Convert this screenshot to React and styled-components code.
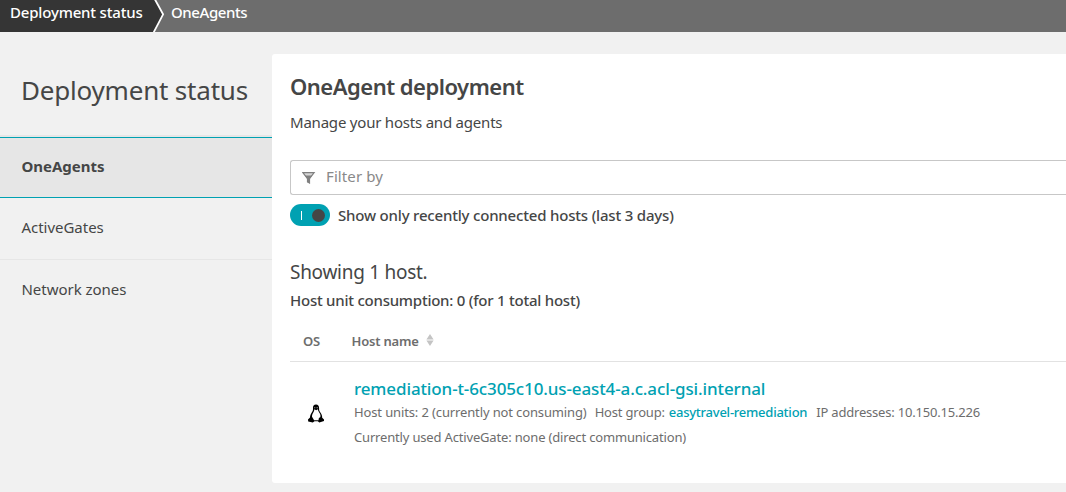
import React from "react";
import styled, { createGlobalStyle } from "styled-components";

const teal = "#00a1b2";
const ink = "#454646";

const GlobalStyle = createGlobalStyle`
  *, *::before, *::after { box-sizing: border-box; }
  body {
    margin: 0;
    background: #f1f1f1;
    color: ${ink};
    font-family: "Noto Sans", "Open Sans", sans-serif;
    font-size: 15px;
    overflow: hidden;
  }
`;

const Page = styled.div`
  display: flex;
  flex-direction: column;
  height: 492px;
`;

const Breadcrumbs = styled.nav`
  display: flex;
  flex: none;
  height: 32px;
  background: #6d6d6d;
  color: #fff;
  line-height: 25px;
  font-weight: 500;
`;

const RootCrumb = styled.a`
  width: 153px;
  padding-left: 10px;
  background: #353535;
  letter-spacing: -0.18px;
  white-space: nowrap;
`;

const CrumbArrow = styled.svg`
  display: block;
  width: 12px;
  height: 32px;
`;

const Crumb = styled.span`
  padding-left: 6px;
  letter-spacing: -0.42px;
`;

const Body = styled.div`
  display: flex;
  flex: 1;
  min-height: 0;
`;

const Sidebar = styled.aside`
  flex: none;
  width: 272px;
`;

const SidebarTitle = styled.h2`
  margin: 0;
  height: 105px;
  padding: 38px 0 0 21px;
  border-bottom: 2px solid #e6e6e6;
  font-size: 26px;
  font-weight: 400;
  line-height: 40px;
  letter-spacing: -0.2px;
`;

const NavItem = styled.a`
  display: flex;
  align-items: center;
  height: ${(p) => (p.$active ? 61 : 62)}px;
  padding: 0 21.5px 4px;
  border-style: solid;
  border-width: ${(p) => (p.$active ? "1px 0" : "0 0 1px")};
  border-color: ${(p) => (p.$active ? teal : p.$last ? "transparent" : "#e6e6e6")};
  background: ${(p) => (p.$active ? "#e6e6e6" : "transparent")};
  font-weight: ${(p) => (p.$active ? 700 : 400)};
  letter-spacing: -0.03px;
`;

const Panel = styled.main`
  flex: 1;
  height: 429px;
  margin-top: 22px;
  padding: 19px 0 0 18px;
  background: #fff;
  border-radius: 3px 0 0 3px;
`;

const Title = styled.h1`
  margin: 0;
  font-size: 22px;
  font-weight: 600;
  line-height: 26px;
  letter-spacing: -0.5px;
`;

const Subtitle = styled.p`
  margin: 12px 0 0;
  line-height: 22px;
  letter-spacing: -0.21px;
`;

const FilterBox = styled.div`
  display: flex;
  align-items: center;
  height: 35px;
  margin-top: 27px;
  padding: 0 0 4px 11px;
  border: 1px solid #c7c7c7;
  border-right: 0;
  border-radius: 3px 0 0 3px;
  color: #898989;
  letter-spacing: 0.1px;
`;

const FilterIcon = styled.svg`
  width: 14px;
  height: 14px;
  margin: 4px 10px 0 0;
`;

const ToggleRow = styled.label`
  display: flex;
  align-items: center;
  height: 22px;
  margin-top: 9px;
  font-weight: 500;
  letter-spacing: -0.19px;
`;

const Toggle = styled.span`
  display: flex;
  align-items: center;
  justify-content: space-between;
  width: 40px;
  height: 22px;
  margin-right: 8px;
  padding: 0 5px 0 11px;
  border-radius: 11px;
  background: ${teal};

  &::before {
    content: "";
    width: 1px;
    height: 9px;
    background: #fff;
  }

  &::after {
    content: "";
    width: 13px;
    height: 13px;
    margin-top: 1px;
    border-radius: 50%;
    background: ${ink};
  }
`;

const Summary = styled.h3`
  margin: 33px 0 0;
  font-size: 19px;
  font-weight: 400;
  line-height: 26px;
  letter-spacing: -0.28px;
`;

const Consumption = styled.p`
  margin: 4px 0 0;
  font-weight: 500;
  line-height: 22px;
  letter-spacing: -0.24px;
`;

const HeaderRow = styled.div`
  display: grid;
  grid-template-columns: 61.5px auto 1fr;
  align-items: center;
  height: 41px;
  margin-top: 10px;
  padding-bottom: 1px;
  border-bottom: 1px solid #e2e2e2;
  color: #6d6d6d;
  font-size: 13px;
  font-weight: 600;
  letter-spacing: -0.2px;
`;

const OsHeader = styled.span`
  padding-left: 13px;
`;

const SortIcon = styled.svg`
  width: 8px;
  height: 12px;
  margin: 0 0 2px 7px;
`;

const HostRow = styled.div`
  display: grid;
  grid-template-columns: 64px 1fr;
  padding-top: 14px;
`;

const OsIcon = styled.svg`
  width: 18px;
  height: 19px;
  margin: 28px 0 0 17px;
`;

const HostName = styled.a`
  display: block;
  color: ${teal};
  font-size: 17px;
  font-weight: 500;
  line-height: 25px;
  letter-spacing: -0.12px;
`;

const Meta = styled.div`
  display: flex;
  height: 25px;
  color: #6d6d6d;
  font-size: 13px;
  line-height: 23px;
  white-space: nowrap;
`;

const MetaItem = styled.span`
  margin-right: ${(p) => p.$gap || 0}px;
  letter-spacing: ${(p) => p.$track}px;
`;

const GroupLink = styled.a`
  margin-right: 9px;
  color: ${teal};
  font-weight: 500;
  letter-spacing: -0.24px;
`;

export default function App() {
  return (
    <Page>
      <GlobalStyle />
      <Breadcrumbs>
        <RootCrumb>Deployment status</RootCrumb>
        <CrumbArrow viewBox="0 0 12 32">
          <path d="M0 0H2L10 14.5L0.5 32H0Z" fill="#353535" />
          <path d="M1.7 -1L10.1 14.3L0.3 33" fill="none" stroke="#fff" strokeWidth="1.8" />
        </CrumbArrow>
        <Crumb>OneAgents</Crumb>
      </Breadcrumbs>
      <Body>
        <Sidebar>
          <SidebarTitle>Deployment status</SidebarTitle>
          <NavItem $active>OneAgents</NavItem>
          <NavItem>ActiveGates</NavItem>
          <NavItem $last>Network zones</NavItem>
        </Sidebar>
        <Panel>
          <Title>OneAgent deployment</Title>
          <Subtitle>Manage your hosts and agents</Subtitle>
          <FilterBox>
            <FilterIcon viewBox="0 0 14 14">
              <path d="M0.8 1.7H12.2L7.7 7.6V12.2L5.3 10.8V7.6Z" fill="#d6d6d6" />
              <path d="M2.8 4.6H10.2L7.7 8V12.4L5.3 11V8Z" fill="#808080" />
              <path d="M0.9 1.7H12.1L7.5 7.6V12L5.5 10.8V7.6Z" fill="none" stroke="#808080" strokeWidth="1.2" />
            </FilterIcon>
            Filter by
          </FilterBox>
          <ToggleRow>
            <Toggle />
            Show only recently connected hosts (last 3 days)
          </ToggleRow>
          <Summary>Showing 1 host.</Summary>
          <Consumption>Host unit consumption: 0 (for 1 total host)</Consumption>
          <HeaderRow>
            <OsHeader>OS</OsHeader>
            <span>Host name</span>
            <SortIcon viewBox="0 0 8 12">
              <path d="M4 0L7.6 5.4H0.4ZM4 12L7.6 6.6H0.4Z" fill="#c4c4c4" />
            </SortIcon>
          </HeaderRow>
          <HostRow>
            <OsIcon viewBox="0 0 18 20" preserveAspectRatio="none">
              <path
                d="M9 0.5C6.8 0.5 5.9 2 6 4.1C6.1 6.3 5.9 7.2 4.6 9.2C3.5 11 3 12.4 3 14.2L1 16.2L1.2 18.4L5.8 19.4L7.5 18.2H10.8L12.3 19.4L17 17.8V16.4L15.2 14.4C15.2 12.2 14.6 10.6 13.4 8.9C12 6.9 12.1 6.2 12.1 4.1C12 1.8 11.1 0.5 9 0.5Z"
                fill="#000"
              />
              <path
                d="M7.4 5.6L9.2 6.6L10.8 5.5C11.2 7.3 12 8.6 12.8 10C13.6 11.5 13.7 12.8 13.2 14L11.9 14.8L11.5 17H7.1L5 13.5C4.9 12 5.5 10.4 6.3 9C6.9 8 7.3 6.8 7.4 5.6Z"
                fill="#fff"
              />
              <path d="M7.3 3.4H8.3V4.4H7.3ZM9.6 3.4H10.8V4.4H9.6Z" fill="#aaa" />
            </OsIcon>
            <div>
              <HostName>remediation-t-6c305c10.us-east4-a.c.acl-gsi.internal</HostName>
              <Meta>
                <MetaItem $gap={8} $track={-0.13}>Host units: 2 (currently not consuming)</MetaItem>
                <MetaItem $gap={4} $track={-0.2}>Host group:</MetaItem>
                <GroupLink>easytravel-remediation</GroupLink>
                <MetaItem $track={-0.2}>IP addresses: 10.150.15.226</MetaItem>
              </Meta>
              <Meta>
                <MetaItem $track={-0.17}>Currently used ActiveGate: none (direct communication)</MetaItem>
              </Meta>
            </div>
          </HostRow>
        </Panel>
      </Body>
    </Page>
  );
}
